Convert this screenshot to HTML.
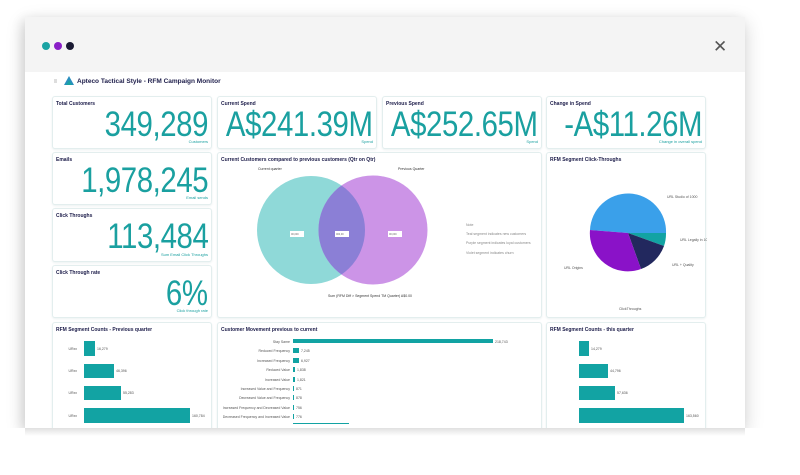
<!DOCTYPE html>
<html><head><meta charset="utf-8"><style>
*{margin:0;padding:0;box-sizing:border-box}
body{width:800px;height:475px;background:#fff;position:relative;overflow:hidden;font-family:"Liberation Sans",sans-serif}
.win{position:absolute;left:25px;top:17px;width:720px;height:411px;background:#fff;box-shadow:0 6px 18px rgba(0,0,0,.18),-4px 2px 10px rgba(0,0,0,.08)}
.hdr{position:absolute;left:0;top:0;width:720px;height:55px;background:#f4f4f4}
.dot{position:absolute;top:25px;width:8px;height:8px;border-radius:50%}
.p{position:absolute;background:#fff;border:1px solid #e3eeee;border-radius:3px;box-shadow:0 1px 2px rgba(0,80,80,.08)}
.t{position:absolute;left:3px;top:4px;font-size:5px;font-weight:bold;color:#1d1d4a;white-space:nowrap}
.n{position:absolute;right:3px;top:8px;font-size:35px;color:#1aa0a0;white-space:nowrap;transform:scaleX(.84);transform-origin:right top;letter-spacing:-.5px}
.s{position:absolute;right:3px;bottom:4px;font-size:4px;color:#1aa0a0}
.bar{position:absolute;background:#12a3a3}
.lb{position:absolute;font-size:3.5px;color:#555;white-space:nowrap}
</style></head><body>
<div class="win">
<div class="hdr"></div>
<div class="dot" style="left:17px;background:#1aa3a3"></div>
<div class="dot" style="left:29px;background:#8a1fc7"></div>
<div class="dot" style="left:41px;background:#1a1a33"></div>
<div style="position:absolute;left:688px;top:20px;font-size:17px;color:#555">✕</div>
<div style="position:absolute;left:29px;top:62px;width:3px;height:4px;background:#ddd"></div>
<svg style="position:absolute;left:39px;top:59px" width="10" height="10"><polygon points="5,0 10,9 0,9" fill="#2a8fbf"/><polygon points="5,4 8,9 2,9" fill="#1aa3a3"/></svg>
<div style="position:absolute;left:52px;top:61px;font-size:6.5px;font-weight:bold;color:#1d1d4a">Apteco Tactical Style - RFM Campaign Monitor</div>
</div>

<div class="p" style="left:52px;top:96px;width:160px;height:53px"><div class="t">Total Customers</div><div class="n">349,289</div><div class="s">Customers</div></div>
<div class="p" style="left:217px;top:96px;width:160px;height:53px"><div class="t">Current Spend</div><div class="n">A$241.39M</div><div class="s">Spend</div></div>
<div class="p" style="left:382px;top:96px;width:160px;height:53px"><div class="t">Previous Spend</div><div class="n">A$252.65M</div><div class="s">Spend</div></div>
<div class="p" style="left:546px;top:96px;width:160px;height:53px"><div class="t">Change in Spend</div><div class="n">-A$11.26M</div><div class="s">Change in overall spend</div></div>

<div class="p" style="left:52px;top:152px;width:160px;height:53px"><div class="t">Emails</div><div class="n">1,978,245</div><div class="s">Email sends</div></div>
<div class="p" style="left:52px;top:208px;width:160px;height:54px"><div class="t">Click Throughs</div><div class="n">113,484</div><div class="s">Sum Email Click Throughs</div></div>
<div class="p" style="left:52px;top:265px;width:160px;height:53px"><div class="t">Click Through rate</div><div class="n">6%</div><div class="s">Click through rate</div></div>

<div class="p" style="left:217px;top:152px;width:325px;height:166px"><div class="t">Current Customers compared to previous customers (Qtr on Qtr)</div>
<svg style="position:absolute;left:0;top:0" width="325" height="166">
<circle cx="93" cy="77" r="54" fill="#8fd9d8"/>
<circle cx="155" cy="77" r="54.5" fill="#c98ee6" fill-opacity=".95"/>
<clipPath id="c"><circle cx="93" cy="77" r="54"/></clipPath>
<circle cx="155" cy="77" r="54.5" fill="#8b7fd6" clip-path="url(#c)"/>
<rect x="72" y="78" width="14" height="6" fill="#fff"/><rect x="117" y="78" width="14" height="6" fill="#fff"/><rect x="170" y="78" width="14" height="6" fill="#fff"/>
<text x="73" y="82" font-size="2.5" fill="#666">00,000</text><text x="118" y="82" font-size="2.5" fill="#666">000,00</text><text x="171" y="82" font-size="2.5" fill="#666">00,000</text>
<text x="248" y="73" font-size="3.5" fill="#888">Note</text>
<text x="248" y="82" font-size="3.5" fill="#888">Teal segment indicates new customers</text>
<text x="248" y="91" font-size="3.5" fill="#888">Purple segment indicates loyal customers</text>
<text x="248" y="101" font-size="3.5" fill="#888">Violet segment indicates churn</text>
<text x="40" y="17" font-size="3.5" fill="#333">Current quarter</text>
<text x="180" y="17" font-size="3.5" fill="#333">Previous Quarter</text>
<text x="110" y="144" font-size="3.5" fill="#333">Sum (RFM Diff &gt; Segment Spend TM Quarter) A$0.00</text>
</svg></div>

<div class="p" style="left:546px;top:152px;width:160px;height:166px"><div class="t">RFM Segment Click-Throughs</div>
<svg style="position:absolute;left:0;top:0" width="160" height="166">
<path d="M81 80 L43 77 A38 38 0 0 1 119 80 Z" fill="#3aa0ea"/>
<path d="M81 80 L119 80 A38 38 0 0 1 117 93 Z" fill="#12a3a3"/>
<path d="M81 80 L117 93 A38 38 0 0 1 94 116 Z" fill="#22285e"/>
<path d="M81 80 L94 116 A38 38 0 0 1 43 77 Z" fill="#8a12c8"/>
<text x="120" y="45" font-size="3.5" fill="#555">URL Studio of 1000</text>
<text x="133" y="88" font-size="3.5" fill="#555">URL Legally in 1000</text>
<text x="125" y="113" font-size="3.5" fill="#555">URL + Quality</text>
<text x="17" y="116" font-size="3.5" fill="#555">URL Origins</text>
<text x="72" y="157" font-size="3.5" fill="#555">ClickThroughs</text>
</svg></div>

<div class="p" style="left:52px;top:322px;width:160px;height:110px;border-bottom:none"><div class="t">RFM Segment Counts - Previous quarter</div></div>
<div class="bar" style="left:84px;top:341px;width:11px;height:15px"></div>
<div class="bar" style="left:84px;top:364px;width:30px;height:14px"></div>
<div class="bar" style="left:84px;top:386px;width:37px;height:14px"></div>
<div class="bar" style="left:84px;top:408px;width:106px;height:15px"></div>
<div class="lb" style="left:97px;top:347px">16,279</div><div class="lb" style="left:116px;top:369px">46,396</div><div class="lb" style="left:123px;top:391px">55,283</div><div class="lb" style="left:192px;top:414px">160,784</div>
<div class="lb" style="right:723px;top:347px">URxx</div><div class="lb" style="right:723px;top:369px">URxx</div><div class="lb" style="right:723px;top:391px">URxx</div><div class="lb" style="right:723px;top:414px">URxx</div>

<div class="p" style="left:217px;top:322px;width:325px;height:110px;border-bottom:none"><div class="t">Customer Movement previous to current</div></div>
<div class="bar" style="left:293px;top:339px;width:200px;height:4px"></div>
<div class="bar" style="left:293px;top:348px;width:6px;height:5px"></div>
<div class="bar" style="left:293px;top:358px;width:6px;height:5px"></div>
<div class="bar" style="left:293px;top:367px;width:2px;height:5px"></div>
<div class="bar" style="left:293px;top:377px;width:2px;height:5px"></div>
<div class="bar" style="left:293px;top:386px;width:1px;height:5px"></div>
<div class="bar" style="left:293px;top:395px;width:1px;height:5px"></div>
<div class="bar" style="left:293px;top:405px;width:1px;height:5px"></div>
<div class="bar" style="left:293px;top:414px;width:1px;height:5px"></div>
<div class="bar" style="left:293px;top:423px;width:56px;height:1px"></div>
<div class="lb" style="right:510px;top:340px">Stay Same</div>
<div class="lb" style="right:510px;top:349px">Reduced Frequency</div>
<div class="lb" style="right:510px;top:359px">Increased Frequency</div>
<div class="lb" style="right:510px;top:368px">Reduced Value</div>
<div class="lb" style="right:510px;top:378px">Increased Value</div>
<div class="lb" style="right:510px;top:387px">Increased Value and Frequency</div>
<div class="lb" style="right:510px;top:396px">Decreased Value and Frequency</div>
<div class="lb" style="right:510px;top:406px">Increased Frequency and Decreased Value</div>
<div class="lb" style="right:510px;top:415px">Decreased Frequency and Increased Value</div>
<div class="lb" style="left:495px;top:340px">218,743</div><div class="lb" style="left:301px;top:349px">7,245</div><div class="lb" style="left:301px;top:359px">6,927</div><div class="lb" style="left:297px;top:368px">1,838</div><div class="lb" style="left:297px;top:378px">1,821</div><div class="lb" style="left:296px;top:387px">871</div><div class="lb" style="left:296px;top:396px">878</div><div class="lb" style="left:296px;top:406px">756</div><div class="lb" style="left:296px;top:415px">776</div>

<div class="p" style="left:546px;top:322px;width:160px;height:110px;border-bottom:none"><div class="t">RFM Segment Counts - this quarter</div></div>
<div class="bar" style="left:579px;top:341px;width:10px;height:15px"></div>
<div class="bar" style="left:579px;top:364px;width:29px;height:14px"></div>
<div class="bar" style="left:579px;top:386px;width:36px;height:14px"></div>
<div class="bar" style="left:579px;top:408px;width:105px;height:15px"></div>
<div class="lb" style="left:591px;top:347px">14,279</div><div class="lb" style="left:610px;top:369px">44,796</div><div class="lb" style="left:617px;top:391px">57,636</div><div class="lb" style="left:686px;top:414px">163,560</div>
<div style="position:absolute;left:0;top:428px;width:800px;height:47px;background:#fff"></div>
<div style="position:absolute;left:25px;top:428px;width:720px;height:8px;background:linear-gradient(rgba(0,0,0,.12),rgba(0,0,0,0))"></div>
</body></html>
